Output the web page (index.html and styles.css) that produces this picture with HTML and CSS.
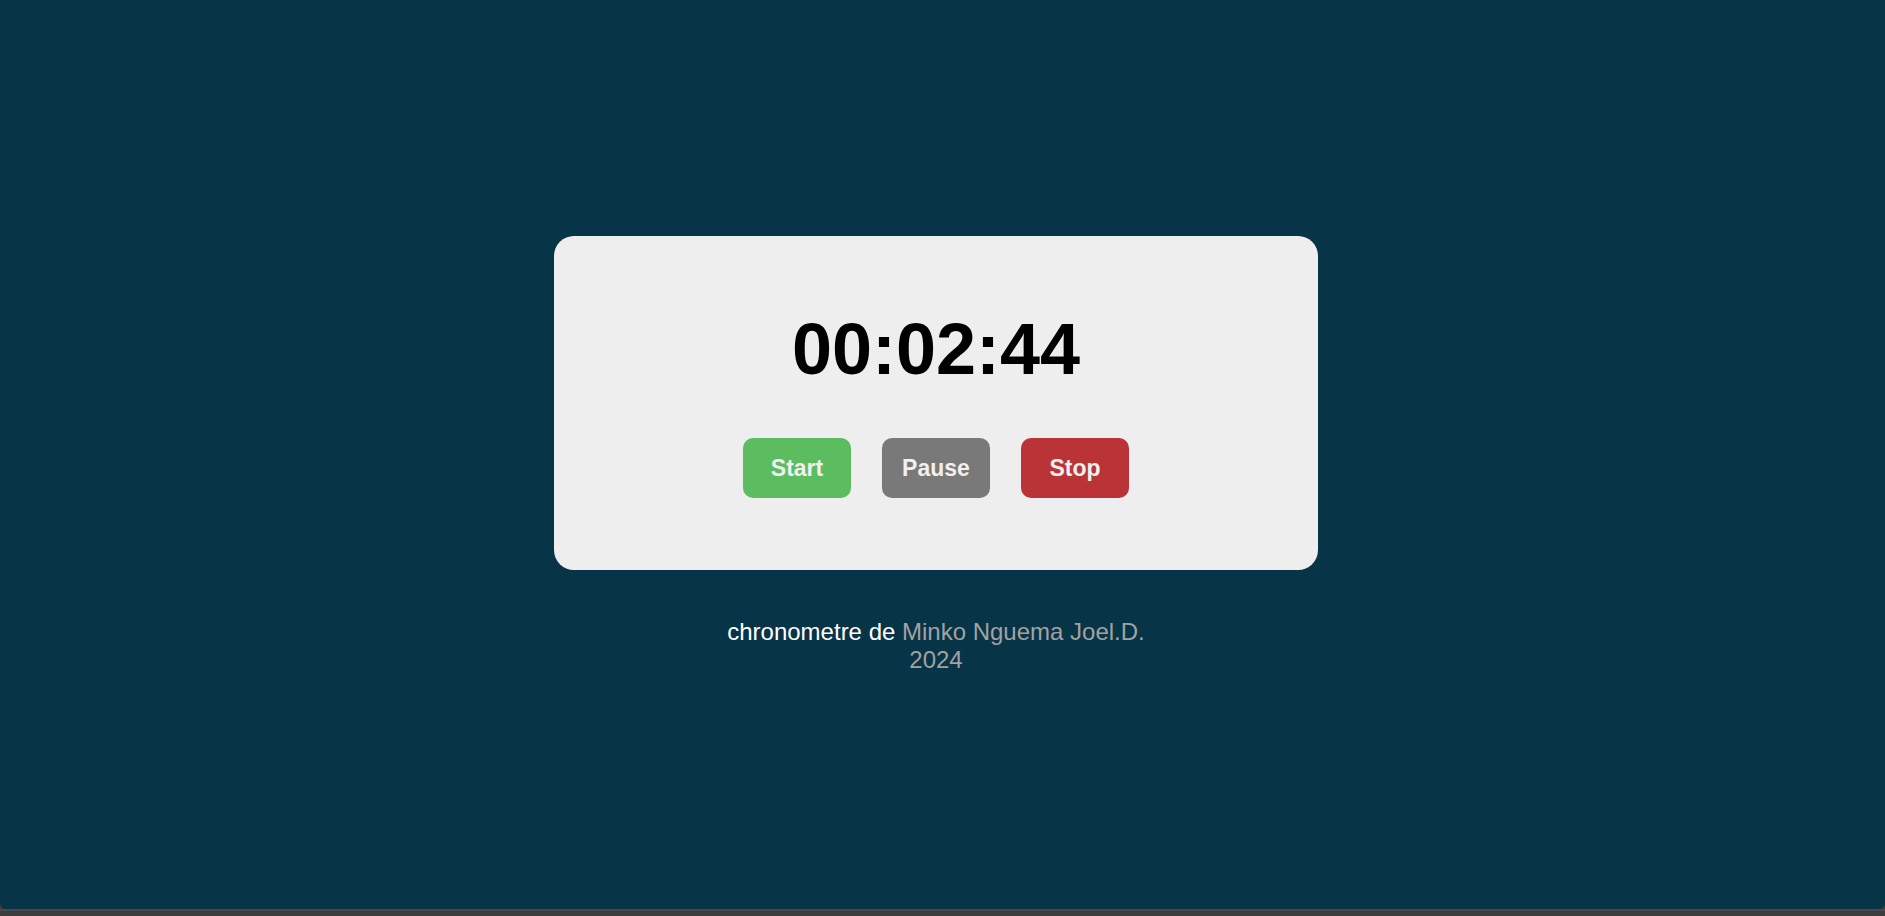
FILE: index.html
```html
<!DOCTYPE html>
<html lang="fr">
<head>
<meta charset="utf-8">
<title>Chronometre</title>
<link rel="stylesheet" href="styles.css">
</head>
<body>
<div class="screen">
  <main class="stage">
    <section class="card">
      <div class="timer">00:02:44</div>
      <div class="controls">
        <button class="btn btn-start">Start</button>
        <button class="btn btn-pause">Pause</button>
        <button class="btn btn-stop">Stop</button>
      </div>
    </section>
    <footer class="credit">
      <p>chronometre de <span class="author">Minko Nguema Joel.D.</span><br><span class="author">2024</span></p>
    </footer>
  </main>
</div>
<div class="taskbar"></div>
</body>
</html>
```

FILE: styles.css
```css
* { box-sizing: border-box; }

html, body {
  margin: 0;
  padding: 0;
  height: 100%;
}

body {
  display: flex;
  flex-direction: column;
  background: #3c3c3c;
  font-family: "Liberation Sans", Arial, sans-serif;
  overflow: hidden;
}

.screen {
  flex: 1;
  background: #073447;
  border-radius: 0 0 6px 6px;
  display: flex;
}

.stage {
  flex: 1;
  display: flex;
  flex-direction: column;
  align-items: center;
  justify-content: center;
  padding-right: 13px;
}

.card {
  width: 764px;
  background: #eeeeee;
  border-radius: 20px;
  padding: 72px 0;
  display: flex;
  flex-direction: column;
  align-items: center;
  gap: 47px;
}

.timer {
  font-size: 72px;
  font-weight: bold;
  line-height: 83px;
  color: #000;
}

.controls {
  display: flex;
  gap: 31px;
}

.btn {
  width: 108px;
  height: 60px;
  border: none;
  border-radius: 10px;
  font-family: "Liberation Sans", Arial, sans-serif;
  font-size: 23px;
  font-weight: bold;
  color: #f0f0f0;
  padding: 2px 0 0;
  cursor: pointer;
}

.btn-start { background: #5bbd60; }
.btn-pause { background: #797979; }
.btn-stop { background: #ba3437; }

.credit {
  margin-top: 48px;
  text-align: center;
  font-size: 24px;
  color: #ffffff;
}

.credit p {
  margin: 0;
}

.author {
  color: #a2a2a2;
}

.taskbar {
  height: 7px;
  background: #3c3c3c;
  border-top: 2px solid #4a4a4a;
}
```
